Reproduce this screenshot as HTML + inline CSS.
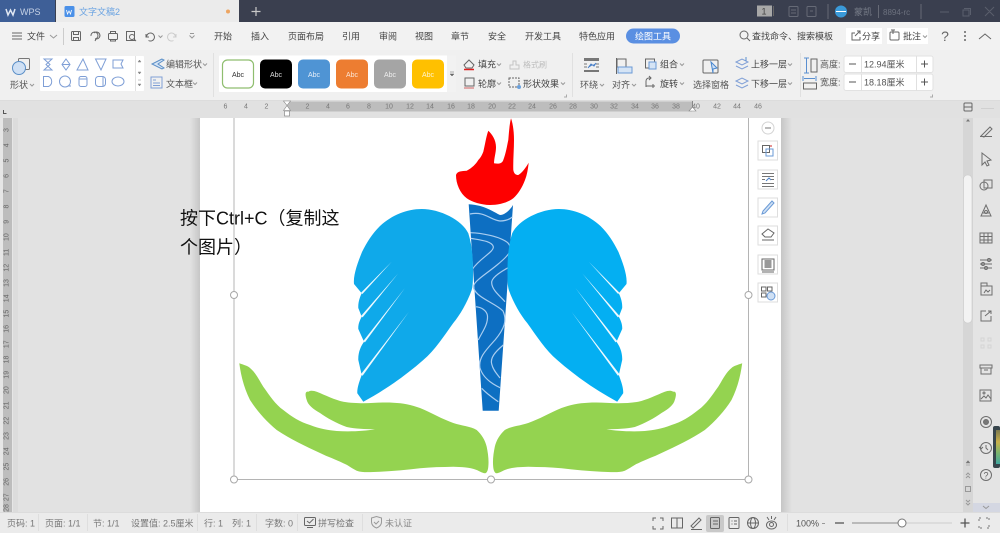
<!DOCTYPE html>
<html lang="zh-CN"><head><meta charset="utf-8"><title>WPS</title>
<style>
html,body{margin:0;padding:0;width:1000px;height:533px;overflow:hidden;background:#e2e2e2}
svg{display:block;position:absolute;left:0;top:0;filter:blur(.35px)}
text{font-family:"Liberation Sans","Noto Sans CJK SC",sans-serif;font-size:9px;fill:#555}
.c{text-anchor:middle}
.r{font-size:7px;fill:#777;text-anchor:middle}
.v{font-size:7px;fill:#666;text-anchor:middle}
.i{fill:none;stroke:#666;stroke-width:1}
.b{fill:none;stroke:#7f9fd6;stroke-width:1}
.g{fill:none;stroke:#999;stroke-width:1}
.s{font-size:9px;fill:#777}
.w{font-size:7px;text-anchor:middle;fill:#333}
</style></head><body>
<svg width="1000" height="533" viewBox="0 0 1000 533" xmlns="http://www.w3.org/2000/svg">
<defs>
<linearGradient id="sl" x1="0" x2="1" y1="0" y2="0"><stop offset="0" stop-color="#e2e2e2"/><stop offset="1" stop-color="#c6c6c6"/></linearGradient>
<linearGradient id="sr" x1="0" x2="1" y1="0" y2="0"><stop offset="0" stop-color="#c6c6c6"/><stop offset="1" stop-color="#e2e2e2"/></linearGradient>
<linearGradient id="rec" x1="0" x2="0" y1="0" y2="1"><stop offset="0" stop-color="#7d7a50"/><stop offset=".35" stop-color="#c9b04a"/><stop offset=".65" stop-color="#7fb56a"/><stop offset="1" stop-color="#3fa7a0"/></linearGradient>
</defs>
<!-- title bar -->
<rect width="1000" height="22" fill="#3a3f4f"/>
<rect width="55" height="22" fill="#3e5f97"/>
<rect x="56" width="183" height="22" fill="#ebebeb"/>
<path d="M6 9l2 6 2.500-5 2.500 5 2-6" fill="none" stroke="#dfe6f2" stroke-width="1.500"/>
<text x="20" y="15" style="font-size:9px;fill:#c6d2e6">WPS</text>
<rect x="64.500" y="6" width="10" height="11" rx="1.500" fill="#4a90e8"/><path d="M66.500 10l1 4 1.500-3 1.500 3 1-4" fill="none" stroke="#fff" stroke-width=".8"/>
<text x="79" y="15" style="fill:#6aa3e2">文字文稿2</text>
<circle cx="228" cy="11.500" r="2" fill="#eda562"/>
<path d="M251.500 11.500h9M256 7v9" stroke="#c8c8c8" stroke-width="1.200"/>
<rect x="757" y="5.500" width="15" height="11" fill="#a8a8a8"/><text x="764" y="14.500" class="c" style="fill:#444">1</text>
<path d="M773.500 6v10" stroke="#666"/>
<g fill="none" stroke="#666a76"><rect x="789" y="6.500" width="9" height="10" rx="1"/><rect x="807" y="6.500" width="9" height="10" rx="1"/><path d="M791 10h5M791 13h5M813 11h-3"/><path d="M828 4v15M878.500 5v13M921 4v15"/></g>
<circle cx="841" cy="11.500" r="6" fill="#3a9ad9"/><path d="M836 11.500h10" stroke="#fff"/>
<text x="854" y="15" style="fill:#777c88">蒙凯</text>
<text x="883" y="15" style="font-size:8px;fill:#6c717e">8894-rc</text>
<g fill="none" stroke="#5a5f6d"><path d="M940 12h9M964 8.500h6.500v6.500M963 10h6v6h-6zM985 7l9 9M994 7l-9 9"/></g>
<!-- menu row -->
<rect y="22" width="1000" height="28" fill="#f2f2f2"/>
<path d="M12 33h10M12 36h10M12 39h10" stroke="#666"/>
<text x="27" y="39.500" style="fill:#444">文件</text>
<path d="M50 35l3.500 3 3.500-3" class="g"/>
<path d="M63.500 28v17" stroke="#ccc"/>
<g class="i">
<rect x="71.500" y="31.500" width="9" height="9" rx="1"/><path d="M73.500 31.500v3h5v-3M73.500 40.500v-3h5v3"/>
<path d="M91 36a3.500 3.500 0 1 1 4 3M94 33a3.500 3.500 0 1 1 2 6l-1 2"/>
<rect x="108.500" y="33.500" width="9" height="6" rx="1"/><path d="M110.500 33.500v-2h5v2M110.500 39.500v1.500h5v-1.500"/>
<rect x="126.500" y="31.500" width="8" height="9"/><circle cx="132" cy="37" r="2.500"/><path d="M134 39l2 2"/>
<path d="M146 34v3h3M146.500 36.500a4 4 0 1 1 2 4"/>
</g>
<path d="M158.500 35.500l2 2 2-2" class="g"/>
<path d="M176 34v3h-3M175.500 36.500a4 4 0 1 0-2 4" fill="none" stroke="#ccc"/>
<path d="M190 33.500h4M189.500 35.500l2.500 2.500 2.500-2.500" class="g"/>
<g style="fill:#444">
<text x="214" y="39.500" style="fill:#444">开始</text><text x="251" y="39.500" style="fill:#444">插入</text><text x="288" y="39.500" style="fill:#444">页面布局</text><text x="342" y="39.500" style="fill:#444">引用</text><text x="379" y="39.500" style="fill:#444">审阅</text><text x="415" y="39.500" style="fill:#444">视图</text><text x="451" y="39.500" style="fill:#444">章节</text><text x="488" y="39.500" style="fill:#444">安全</text><text x="525" y="39.500" style="fill:#444">开发工具</text><text x="579" y="39.500" style="fill:#444">特色应用</text></g>
<rect x="626" y="28.500" width="54" height="15" rx="7.500" fill="#5a8fe2"/>
<text x="635" y="39.500" style="fill:#fff">绘图工具</text>
<circle cx="744" cy="35" r="4" class="i"/><path d="M747 38l3 3" class="i"/>
<text x="752" y="39.500" style="fill:#444">查找命令、搜索模板</text>
<rect x="846" y="28" width="36" height="16" fill="#fff"/>
<path d="M855 33h-3v7h8v-3M857 31l3 0v3M855 36l5-5" class="i"/>
<text x="862" y="39.500" style="fill:#444">分享</text>
<rect x="887" y="28" width="41" height="16" fill="#fff"/>
<rect x="890" y="32" width="9" height="8" rx="1" class="i"/><path d="M893 30v4M891 30h4" class="i"/>
<text x="903" y="39.500" style="fill:#444">批注</text><path d="M923 35.500l2 2 2-2" class="g"/>
<text x="945" y="41" class="c" style="font-size:14px;fill:#666">?</text>
<g fill="#666"><circle cx="965" cy="32" r="1"/><circle cx="965" cy="36" r="1"/><circle cx="965" cy="40" r="1"/></g>
<path d="M979 39l6-5 6 5" class="i"/>
<!-- ribbon -->
<rect y="50" width="1000" height="50" fill="#f0f0f0"/>
<path d="M0 100.500h1000" stroke="#dcdcdc"/>
<g fill="none" stroke="#555"><rect x="18.500" y="58.500" width="11" height="11" rx="1" stroke="#777"/></g>
<circle cx="19" cy="68" r="6.500" fill="#cfe0f4" stroke="#5b8fc7"/>
<text x="10" y="88" style="fill:#555">形状</text><path d="M30 84l2 2 2-2" class="g"/>
<rect x="40" y="56" width="104" height="35" rx="1" fill="#fff"/>
<path d="M135.500 56v35" stroke="#e2e2e2"/>
<path d="M138 62h3l-1.500-2zM138 72h3l-1.500 2zM138 84h3l-1.500 2zM138 80h3" fill="#888" stroke="#888" stroke-width=".5"/>
<g class="b">
<path d="M44 59h8l-6 5.500 6 5.500h-8l6-5.500z"/>
<path d="M66 59l4 5.500-4 5.500-4-5.500zM62 64.500h8"/>
<path d="M83 59l5 11h-11z"/>
<path d="M95.500 59h10.500l-5 11z"/>
<path d="M113 60h10l-2 4 2 4h-10z"/>
<path d="M43.500 76.500h5a5.500 5.500 0 0 1 0 10h-5z"/>
<circle cx="65" cy="81.500" r="5.500"/><path d="M68 86h3"/>
<rect x="79" y="76.500" width="8" height="10" rx="2"/><path d="M79 79h8"/>
<rect x="95.500" y="76.500" width="10" height="10" rx="3"/><path d="M103 76.500v10"/>
<ellipse cx="118" cy="81.500" rx="6" ry="4.500"/>
</g>
<path d="M162 59l-10 5 10 5 2-1-6-4 6-4z" fill="#d5e4f5" stroke="#5b8fc7"/>
<text x="166" y="67.500">编辑形状</text><path d="M203 63.500l2 2 2-2" class="g"/>
<rect x="151" y="77" width="11" height="11" class="b"/><path d="M153 80h3M153 83h7M153 85.500h7" class="b"/>
<text x="166" y="87">文本框</text><path d="M193 82.500l2 2 2-2" class="g"/>
<path d="M213.500 53v44" stroke="#e0e0e0"/>
<rect x="219" y="55.500" width="237" height="36.500" rx="1" fill="#fff"/>
<rect x="447" y="55.500" width="9" height="36.500" fill="#f2f2f2"/>
<path d="M450 72h4M450 74h4l-2 2z" fill="#666" stroke="#666" stroke-width=".5"/>
<rect x="222.500" y="60" width="31" height="28" rx="5" fill="#fff" stroke="#8fbe6f" stroke-width="1.200"/>
<rect x="260" y="59.500" width="32" height="29" rx="5" fill="#000"/>
<rect x="298" y="59.500" width="32" height="29" rx="5" fill="#4f94d4"/>
<rect x="336" y="59.500" width="32" height="29" rx="5" fill="#ed7d31"/>
<rect x="374" y="59.500" width="32" height="29" rx="5" fill="#a5a5a5"/>
<rect x="412" y="59.500" width="32" height="29" rx="5" fill="#ffc000"/>
<text x="238" y="77" class="w">Abc</text>
<text x="276" y="77" class="w" style="fill:#ddd">Abc</text>
<text x="314" y="77" class="w" style="fill:#e6eef8">Abc</text>
<text x="352" y="77" class="w" style="fill:#fbe4d4">Abc</text>
<text x="390" y="77" class="w" style="fill:#eee">Abc</text>
<text x="428" y="77" class="w" style="fill:#fff4cc">Abc</text>
<path d="M464 65l5-5 5 5-2 3h-6z" class="i"/><path d="M464 69.500h10" stroke="#e02020" stroke-width="1.500"/>
<text x="478" y="67.500" style="fill:#444">填充</text><path d="M497 63.500l2 2 2-2" class="g"/>
<rect x="465" y="78" width="9" height="8" class="i"/><path d="M464 88h10" stroke="#d06060"/>
<text x="478" y="87" style="fill:#444">轮廓</text><path d="M497 82.500l2 2 2-2" class="g"/>
<path d="M510 69v-4h3v-4h3v4h3v4z" fill="none" stroke="#c4c4c4"/>
<text x="523" y="67.500" style="fill:#bdbdbd;font-size:8px">格式刷</text>
<rect x="509" y="78" width="10" height="9" fill="none" stroke="#666" stroke-dasharray="2 1"/><circle cx="519" cy="87" r="2" fill="#6aa0dc"/>
<text x="523" y="87" style="fill:#444">形状效果</text><path d="M561 82.500l2 2 2-2" class="g"/>
<path d="M564 97h2.500v-2.500" stroke="#aaa" fill="none"/>
<path d="M572.500 53v44" stroke="#e0e0e0"/>
<rect x="584" y="58" width="15" height="3" fill="#777"/><rect x="584" y="70" width="15" height="2" fill="#777"/><path d="M584 64h3M584 67h3M596 64h3M596 67h3" stroke="#777"/><path d="M588 68l3-4 3 2 2-3" fill="#4a80c8" stroke="#4a80c8"/>
<text x="580" y="88" style="fill:#555">环绕</text><path d="M600 84l2 2 2-2" class="g"/>
<rect x="617" y="59" width="9" height="8" class="i"/><rect x="618" y="67" width="14" height="6" fill="#d5e4f5" stroke="#6a9ad6"/><path d="M616.500 58v16" stroke="#666"/>
<text x="612" y="88" style="fill:#555">对齐</text><path d="M632 84l2 2 2-2" class="g"/>
<rect x="645.500" y="59" width="9" height="9" class="i"/><rect x="649" y="62" width="7" height="7" fill="#d5e4f5" stroke="#6a9ad6"/>
<text x="660" y="67.500" style="fill:#444">组合</text><path d="M680 63.500l2 2 2-2" class="g"/>
<path d="M646 87v-6a3 3 0 0 1 3-3h2M649 76l2 2-2 2M646 86h9M653 84v4" class="i"/>
<text x="660" y="87" style="fill:#444">旋转</text><path d="M680 82.500l2 2 2-2" class="g"/>
<rect x="703" y="60" width="15" height="13" rx="1" class="i"/><path d="M711 62l6 6-4 1 0 4z" fill="#cfe0f4" stroke="#4a88cf"/>
<text x="693" y="88" style="fill:#555">选择窗格</text>
<path d="M736 62l6 3 6-3-6-3zM736 66l6 3 6-3" class="b" stroke="#5a8fd0"/><path d="M746 57v4" stroke="#5a8fd0"/>
<text x="751" y="67.500" style="fill:#444">上移一层</text><path d="M788 63.500l2 2 2-2" class="g"/>
<path d="M736 81l6 3 6-3-6-3zM736 85l6 3 6-3" class="b" stroke="#5a8fd0"/>
<text x="751" y="87" style="fill:#444">下移一层</text><path d="M788 82.500l2 2 2-2" class="g"/>
<path d="M800.500 53v44" stroke="#e0e0e0"/>
<path d="M804 58h5M804 73h5M806.500 58v15" stroke="#5a8fd0"/><rect x="811" y="59" width="6" height="13" class="i"/>
<text x="820" y="67.500" style="fill:#555">高度:</text>
<path d="M803 76v5M816 76v5M804 78.500h11" stroke="#5a8fd0"/><rect x="803.500" y="83" width="13" height="6" class="i"/>
<text x="820" y="85.500" style="fill:#555">宽度:</text>
<g fill="#fff" stroke="#e2e2e2"><rect x="844" y="56" width="89" height="16.500" rx="2"/><rect x="844" y="74" width="89" height="16.500" rx="2"/></g>
<path d="M861.500 56v17M916.500 56v17M861.500 74v17M916.500 74v17" stroke="#e0e0e0"/>
<path d="M849 64h7M849 82h7M921 64h7M924.500 60.500v7M921 82h7M924.500 78.500v7" stroke="#555"/>
<text x="864" y="67.500" style="fill:#555">12.94厘米</text>
<text x="864" y="85.500" style="fill:#555">18.18厘米</text>
<path d="M930 97h2.500v-2.500" stroke="#aaa" fill="none"/>
<!-- ruler -->
<rect y="101" width="1000" height="17" fill="#e1e1e1"/>
<rect x="287" y="101.500" width="405" height="10" fill="#bdbdbd"/>
<path d="M3.500 110v3.500h3" stroke="#555" fill="none"/>
<path d="M283.500 101h7l-3.500 4.500 3.500 5h-7l3.500-5z" fill="#fff" stroke="#888" stroke-width=".6"/>
<rect x="284.500" y="111" width="5" height="5" fill="#fff" stroke="#888" stroke-width=".7"/>
<path d="M692.500 101v10" stroke="#888"/><path d="M689 111l3.500-4 3.500 4z" fill="#fff" stroke="#888" stroke-width=".6"/>
<text class="r" x="225.500" y="108.500">6</text><text class="r" x="246" y="108.500">4</text><text class="r" x="266.500" y="108.500">2</text><text class="r" x="307.500" y="108.500">2</text><text class="r" x="328" y="108.500">4</text><text class="r" x="348" y="108.500">6</text><text class="r" x="369" y="108.500">8</text><text class="r" x="389" y="108.500">10</text><text class="r" x="410" y="108.500">12</text><text class="r" x="430" y="108.500">14</text><text class="r" x="451" y="108.500">16</text><text class="r" x="471" y="108.500">18</text><text class="r" x="492" y="108.500">20</text><text class="r" x="512" y="108.500">22</text><text class="r" x="532" y="108.500">24</text><text class="r" x="553" y="108.500">26</text><text class="r" x="573" y="108.500">28</text><text class="r" x="594" y="108.500">30</text><text class="r" x="614" y="108.500">32</text><text class="r" x="635" y="108.500">34</text><text class="r" x="655" y="108.500">36</text><text class="r" x="676" y="108.500">38</text><text class="r" x="696" y="108.500">40</text><text class="r" x="717" y="108.500">42</text><text class="r" x="737" y="108.500">44</text><text class="r" x="758" y="108.500">46</text>
<rect x="964" y="103" width="8" height="8" rx="1" fill="none" stroke="#666"/><path d="M964 107h8" stroke="#666"/><path d="M981 108.500h13" stroke="#d0d0d0"/>
<!-- doc area -->
<rect y="118" width="1000" height="394" fill="#e2e2e2"/>
<rect x="0" y="118" width="13" height="394" fill="#e6e6e6"/>
<rect x="3" y="118" width="9" height="394" fill="#bdbdbd"/>
<rect x="13" y="118" width="5" height="394" fill="#dcdcdc"/>
<rect x="190" y="118" width="10" height="394" fill="url(#sl)"/>
<rect x="781" y="118" width="11" height="394" fill="url(#sr)"/>
<rect x="200" y="118" width="581" height="394" fill="#fff"/>
<g>
<text class="v" transform="translate(8.500 130) rotate(-90)">3</text><text class="v" transform="translate(8.500 145.300) rotate(-90)">4</text><text class="v" transform="translate(8.500 160.600) rotate(-90)">5</text><text class="v" transform="translate(8.500 175.900) rotate(-90)">6</text><text class="v" transform="translate(8.500 191.200) rotate(-90)">7</text><text class="v" transform="translate(8.500 206.500) rotate(-90)">8</text><text class="v" transform="translate(8.500 221.800) rotate(-90)">9</text><text class="v" transform="translate(8.500 237.100) rotate(-90)">10</text><text class="v" transform="translate(8.500 252.400) rotate(-90)">11</text><text class="v" transform="translate(8.500 267.700) rotate(-90)">12</text><text class="v" transform="translate(8.500 283) rotate(-90)">13</text><text class="v" transform="translate(8.500 298.300) rotate(-90)">14</text><text class="v" transform="translate(8.500 313.600) rotate(-90)">15</text><text class="v" transform="translate(8.500 328.900) rotate(-90)">16</text><text class="v" transform="translate(8.500 344.200) rotate(-90)">17</text><text class="v" transform="translate(8.500 359.500) rotate(-90)">18</text><text class="v" transform="translate(8.500 374.800) rotate(-90)">19</text><text class="v" transform="translate(8.500 390.100) rotate(-90)">20</text><text class="v" transform="translate(8.500 405.400) rotate(-90)">21</text><text class="v" transform="translate(8.500 420.700) rotate(-90)">22</text><text class="v" transform="translate(8.500 436) rotate(-90)">23</text><text class="v" transform="translate(8.500 451.300) rotate(-90)">24</text><text class="v" transform="translate(8.500 466.600) rotate(-90)">25</text><text class="v" transform="translate(8.500 481.900) rotate(-90)">26</text><text class="v" transform="translate(8.500 497.200) rotate(-90)">27</text><text class="v" transform="translate(8.500 508) rotate(-90)">28</text>
</g>
<!-- graphic -->
<path d="M468.700 204.300C485 205 495 213 500 215C505 215 510 210 513 205L498.700 410.700H482.700Z" fill="#0d6fc2"/>
<g fill="none" stroke="#a9cdf0" stroke-width="1.200">
<path d="M470 214C485 211 490 220 500 221C506 221 510 219 512.500 217"/>
<path d="M470.500 232.700C480 233 500 236 508 243C514 250 508 256 497 265C485 275 472 282 473.500 288C477 298 495 303 503 311C507 320 505 328 495 340C486 350 478 358 480 368C483 378 492 384 500.700 388"/>
<path d="M472.300 269.300C480 258 494 252 493.300 246.700C492 241 480 240 470.700 238.300"/>
<path d="M510 266.700C500 272 491 278 491.700 283C492 290 500 296 505 301.700"/>
<path d="M475 306.700C482 307 487 311 487.500 316C488 325 482 332 478.300 340"/>
<path d="M503.300 345C495 352 490 358 491.700 364C493 370 497 374 500 378"/>
<path d="M481.700 388.300C487 394 493 398 498.300 401.700"/>
</g>
<path d="M456 175C457 171 462 171 466.700 170.700C472 168 476 164 478.300 160C481 157 482 155 483.300 151.700C485 145 486 137 488.300 130.700C492 134 496 140 496 147C496 153 494 158 494 163.300C498 164 502 164 503.300 160C506 153 507 146 508.300 140C509 132 509.500 124 511 118.300C513 124 514 132 514 140C514 150 513 160 513.300 170C514 174 516 175 518.300 175C523 172 526 167 528.700 162.700C528 169 527 175 525 180C522 188 518 194 513.300 198.300C507 203 498 205 490 205C481 205 472 202 466.700 198.300C460 193 456 184 456 175Z" fill="#fe0000"/>
<g>
<path d="M421.700 209C440 209 462 220 468.300 233.300C472 245 473 258 473 270C473 280 473 285 471.700 290C467 303 460 315 453.300 323C444 336 435 350 423.300 360C405 376 385 390 363.300 401.700L357.300 393.300C357 387 360 380 361.700 375L358.300 360C358 352 361 346 364 341.700L358.300 329C358 324 360 320 361.700 316.700L358.300 308C358 302 360 297 361.700 293.300L354 284C353 275 358 262 362 252C367 242 372 234 380 226C392 215 407 209 421.700 209Z" fill="#0fa9ea"/>
<g fill="#eef9ff"><path d="M391.700 261.700L361 292.800L362.400 294Z"/><path d="M398.300 273.300L361 316L362.600 317.400Z"/><path d="M405 288L363.300 341L364.900 342.400Z"/><path d="M409 311.700L360.800 374.400L362.600 375.800Z"/></g>
</g>
<g transform="translate(980.500 0) scale(-1 1)">
<path d="M421.700 209C440 209 462 220 468.300 233.300C472 245 473 258 473 270C473 280 473 285 471.700 290C467 303 460 315 453.300 323C444 336 435 350 423.300 360C405 376 385 390 363.300 401.700L357.300 393.300C357 387 360 380 361.700 375L358.300 360C358 352 361 346 364 341.700L358.300 329C358 324 360 320 361.700 316.700L358.300 308C358 302 360 297 361.700 293.300L354 284C353 275 358 262 362 252C367 242 372 234 380 226C392 215 407 209 421.700 209Z" fill="#04aff2"/>
<g fill="#eef9ff"><path d="M391.700 261.700L361 292.800L362.400 294Z"/><path d="M398.300 273.300L361 316L362.600 317.400Z"/><path d="M405 288L363.300 341L364.900 342.400Z"/><path d="M409 311.700L360.800 374.400L362.600 375.800Z"/></g>
</g>
<path d="M239.300 363.300C244 365 248 366 250 368C256 373 259 380 263.300 386.700C270 396 275 404 283.300 410C292 417 300 422 310 425C320 429 328 430 336.700 431C350 432 365 431 375 429.300C365 429 355 429 346.700 427C336 423 327 418 320 413C313 409 308 405 306.700 400C305 395 305 391 308.300 391.700C311 390 314 391 316.700 391.700C325 395 335 400 343.300 401.700C350 403 357 403 363.300 403.300C373 403 383 402 393.300 402.700C403 403 412 405 420 408C432 413 442 419 453.300 423C462 426 470 426 476.700 430C482 435 485 440 486.700 446.700C488 453 489 460 488.300 466.700C488 470 487 473 485 473.300C482 473 479 471 476.700 470C469 467 461 467 453.300 466.700C442 467 431 467 420 468.300C407 470 393 471 380 471.700C371 472 363 473 356.700 470.700C351 468 348 465 343.300 463.300C335 459 328 457 320 453C305 446 290 439 276.700 430C266 421 257 411 250 400C244 388 241 376 239.300 363.300Z" fill="#94d350"/>
<path transform="translate(981.500 0) scale(-1 1)" d="M239.300 363.300C244 365 248 366 250 368C256 373 259 380 263.300 386.700C270 396 275 404 283.300 410C292 417 300 422 310 425C320 429 328 430 336.700 431C350 432 365 431 375 429.300C365 429 355 429 346.700 427C336 423 327 418 320 413C313 409 308 405 306.700 400C305 395 305 391 308.300 391.700C311 390 314 391 316.700 391.700C325 395 335 400 343.300 401.700C350 403 357 403 363.300 403.300C373 403 383 402 393.300 402.700C403 403 412 405 420 408C432 413 442 419 453.300 423C462 426 470 426 476.700 430C482 435 485 440 486.700 446.700C488 453 489 460 488.300 466.700C488 470 487 473 485 473.300C482 473 479 471 476.700 470C469 467 461 467 453.300 466.700C442 467 431 467 420 468.300C407 470 393 471 380 471.700C371 472 363 473 356.700 470.700C351 468 348 465 343.300 463.300C335 459 328 457 320 453C305 446 290 439 276.700 430C266 421 257 411 250 400C244 388 241 376 239.300 363.300Z" fill="#94d350"/>
<!-- selection -->
<path d="M234 118V479.500H748.500V118" fill="none" stroke="#b4b4b4" stroke-width="1"/>
<g fill="#fff" stroke="#a8a8a8"><circle cx="234" cy="295" r="3.500"/><circle cx="748.500" cy="295" r="3.500"/><circle cx="234" cy="479.500" r="3.500"/><circle cx="491" cy="479.500" r="3.500"/><circle cx="748.500" cy="479.500" r="3.500"/></g>
<!-- floating tools -->
<circle cx="768" cy="128" r="6" fill="#fff" stroke="#d4d4d4"/><path d="M765 128h6" stroke="#777"/>
<g fill="#fff" stroke="#dedede"><rect x="758" y="141" width="19.500" height="19"/><rect x="758" y="170" width="19.500" height="19"/><rect x="758" y="198" width="19.500" height="19"/><rect x="758" y="226" width="19.500" height="19"/><rect x="758" y="255" width="19.500" height="19"/><rect x="758" y="283" width="19.500" height="19"/></g>
<rect x="762.500" y="145.500" width="7" height="7" class="i"/><rect x="766" y="149" width="7" height="7" fill="none" stroke="#6a9ad6"/><circle cx="771" cy="146" r="1" fill="#e07070"/>
<path d="M762 173.500h12M762 176.500h12M762 183.500h12M762 186.500h12M762 179.500h3M771 179.500h3" stroke="#777"/><path d="M766 181l3-3 2 2" stroke="#4a80c8" fill="none"/>
<path d="M762 214l3-1 9-10-2-2-9 10z" fill="#cfe0f4" stroke="#6a9ad6"/>
<path d="M762 234l6-5 6 4-3 4h-6zM762 240h12" class="i"/>
<rect x="762" y="259" width="12" height="11" class="i"/><rect x="764.500" y="260" width="7" height="8" fill="#999"/><path d="M762 272h12" class="i"/>
<g class="i"><rect x="761.500" y="287" width="4.500" height="4"/><rect x="767.500" y="287" width="4.500" height="4"/><rect x="761.500" y="293" width="4.500" height="4"/></g><circle cx="771" cy="296" r="4" fill="#cfe0f4" stroke="#6a9ad6"/>
<!-- scrollbar -->
<rect x="963" y="118" width="10" height="394" fill="#d6d6d6"/>
<rect x="963.500" y="175" width="8.500" height="148" rx="4" fill="#f3f3f3" stroke="#c8c8c8" stroke-width=".6"/>
<path d="M966 121.500h4l-2-2.500z" fill="#777"/>
<path d="M966 463h4l-2-2.500zM966 465h4" fill="#777" stroke="#777" stroke-width=".4"/>
<path d="M966 475l2-2 2 2M966 478l2-2 2 2" class="g"/>
<rect x="965.500" y="486.500" width="5" height="5" class="g"/>
<path d="M966 500l2 2 2-2M966 503l2 2 2-2" class="g"/>
<!-- sidebar -->
<rect x="973" y="118" width="27" height="394" fill="#e4e4e4"/>
<g fill="none" stroke="#6e6e6e">
<path d="M981 136l9-9 2 2-8 8zM980 136.500h12"/>
<path d="M982 153l9 7-4 1 2 4-2 1-2-4-3 3z"/>
<rect x="984" y="180" width="8" height="8"/><circle cx="984" cy="186" r="4"/>
<path d="M986 205l5 11h-10zM983 213h6"/><circle cx="986" cy="212" r="1.500"/>
<rect x="980" y="233" width="12" height="10"/><path d="M980 236.500h12M980 240h12M984 233v10M988 233v10"/>
<path d="M980 260h12M980 264h12M980 268h12"/><circle cx="989" cy="260" r="1.500"/><circle cx="983" cy="264" r="1.500"/><circle cx="986" cy="268" r="1.500"/>
<rect x="981" y="286" width="11" height="9"/><path d="M981 286v-3h6v3M984 293l2-3 2 2 2-2"/>
<path d="M991 316v5h-10v-10h5M985 316l6-5M988 311h3v3"/>
<path d="M981 338h3v3h-3zM988 338h3v3h-3zM981 345h3v3h-3zM988 345h3v3h-3z" stroke="#d4d4d4"/>
<path d="M980 365h12v3h-12zM981 368v6h10v-6M984 370h4"/>
<rect x="980" y="390" width="11" height="11"/><path d="M981 399l3-3 2 2 2-3 3 4"/><circle cx="984" cy="393" r="1"/>
<circle cx="986" cy="422" r="5.500"/><circle cx="986" cy="422" r="2.500" fill="#777"/>
<circle cx="986" cy="448" r="5.500"/><path d="M986 445v3l2 2M979 447l2 2 2-2"/>
<circle cx="986" cy="475" r="5.500"/>
</g>
<text x="986" y="478.500" class="c" style="fill:#666;font-size:9px">?</text>
<rect x="973" y="503" width="27" height="9" fill="#d4d7e2"/><path d="M983 506l3 2.500 3-2.500" class="g"/>
<rect x="993" y="426" width="7" height="42" rx="2" fill="#37454c"/><rect x="996" y="430" width="4" height="34" fill="url(#rec)"/>
<!-- status bar -->
<rect y="512" width="1000" height="21" fill="#ebebeb"/>
<path d="M0 512.500h1000" stroke="#dcdcdc"/>
<path d="M38.500 514v17M87.500 514v17M197.500 514v17M256.500 514v17M297.500 514v17M362.500 514v17M787.500 514v17" stroke="#dedede"/>
<text class="s" x="7" y="526.500">页码: 1</text>
<text class="s" x="45" y="526.500">页面: 1/1</text>
<text class="s" x="93" y="526.500">节: 1/1</text>
<text class="s" x="131" y="526.500">设置值: 2.5厘米</text>
<text class="s" x="204" y="526.500">行: 1</text>
<text class="s" x="232" y="526.500">列: 1</text>
<text class="s" x="265" y="526.500">字数: 0</text>
<rect x="304.500" y="517.500" width="11" height="8" rx="1" class="i"/><path d="M307 521l2.500 2 4-4M307 527.500h6" class="i"/>
<text class="s" x="318" y="526.500">拼写检查</text>
<path d="M371.500 518l5-1.500 5 1.500v4c0 3-2.500 5-5 6-2.500-1-5-3-5-6z" fill="none" stroke="#999"/><path d="M374 522l2 2 3-3" fill="none" stroke="#999"/>
<text class="s" x="385" y="526.500" style="fill:#888">未认证</text>
<rect x="706" y="515" width="18" height="17" rx="2" fill="#c9c9c9"/>
<g class="i">
<path d="M653 521v-3h3M660 518h3v3M663 526v3h-3M656 529h-3v-3"/>
<rect x="671.500" y="518" width="11" height="10"/><path d="M677 518v10"/>
<path d="M691 526l8-8 2 2-8 8zM691 529.500h11"/>
<rect x="710.500" y="517.500" width="9" height="11" rx="1"/><path d="M713 521h5M713 524h5"/>
<rect x="729" y="517.500" width="10" height="11" rx="1"/><path d="M734 521h3M734 524h3M731.500 521h1M731.500 524h1"/>
<circle cx="753" cy="523" r="5.500"/><ellipse cx="753" cy="523" rx="2.500" ry="5.500"/><path d="M747.500 523h11"/>
<ellipse cx="771.500" cy="525" rx="5" ry="4"/><circle cx="771.500" cy="524.500" r="2"/><path d="M767 517l2 3M771.500 516v3M776 517l-2 3"/>
</g>
<text x="796" y="526.500" style="fill:#555">100%</text><path d="M822 523.500h3" stroke="#999"/>
<path d="M835 523h9" stroke="#555" stroke-width="1.300"/>
<path d="M852 523h50" stroke="#888"/><path d="M902 523h50" stroke="#ccc"/>
<circle cx="902" cy="523" r="4" fill="#fff" stroke="#777"/>
<path d="M960.500 523h9M965 518.500v9" stroke="#555" stroke-width="1.300"/>
<path d="M979 521v-3h3M986 518h3v3M989 525v3h-3M982 528h-3v-3" fill="none" stroke="#777" stroke-dasharray="2 1"/>
<!-- text -->
<text x="180" y="224.500" style="font-size:18px;fill:#111">按下Ctrl+C（复制这</text>
<text x="180" y="253.500" style="font-size:18px;fill:#111">个图片）</text>
</svg>
</body></html>
